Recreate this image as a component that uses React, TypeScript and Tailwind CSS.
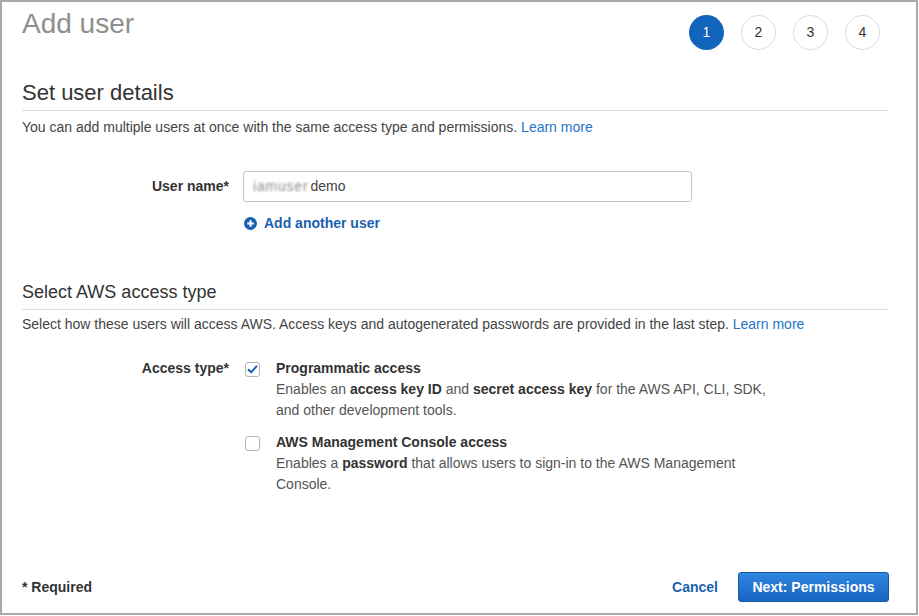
import React from "react";

const font = { fontFamily: '"Liberation Sans", Arial, sans-serif' };

function Step({ n, active }: { n: number; active?: boolean }) {
  return active ? (
    <div className="flex h-[35px] w-[35px] items-center justify-center rounded-full bg-[#1265bb] text-[14px] text-white">
      {n}
    </div>
  ) : (
    <div className="flex h-[35px] w-[35px] items-center justify-center rounded-full border border-[#dcdcdc] bg-white text-[14px] text-[#333]">
      {n}
    </div>
  );
}

function CheckBox({ checked, className }: { checked?: boolean; className?: string }) {
  return (
    <div
      className={
        "flex h-[15px] w-[15px] shrink-0 items-center justify-center rounded-[3px] border border-[#b4b4b4] bg-white " +
        (className ?? "")
      }
    >
      {checked && (
        <svg width="13" height="13" viewBox="0 0 13 13">
          <path d="M2.6 6.8 L5.2 9.3 L10.4 3.4" fill="none" stroke="#1560b8" strokeWidth="2" strokeLinecap="round" strokeLinejoin="round" />
        </svg>
      )}
    </div>
  );
}

export default function App() {
  return (
    <div style={font} className="flex h-[615px] w-[918px] flex-col border-2 border-[#a9a9a9] bg-white pl-5 pr-[27px] text-[#444]">
      {/* Header */}
      <div className="flex items-start justify-between">
        <h1 className="mt-[6px] text-[28px] leading-[32px] text-[#8f8f8f]">Add user</h1>
        <div className="mr-[9px] mt-[13px] flex gap-[17px]">
          <Step n={1} active />
          <Step n={2} />
          <Step n={3} />
          <Step n={4} />
        </div>
      </div>

      {/* Set user details */}
      <h2 className="mt-[29px] border-b border-[#dddddd] pb-[3px] text-[22px] leading-[28px] text-[#333]">Set user details</h2>
      <p className="mt-[6px] text-[14px] leading-[20px] text-[#444]">
        You can add multiple users at once with the same access type and permissions.{" "}
        <span className="text-[#2276cb]">Learn more</span>
      </p>

      <div className="mt-[34px] flex items-center">
        <div className="w-[207px] text-right text-[14px] font-bold text-[#333]">User name*</div>
        <div className="ml-[14px] flex h-[31px] w-[449px] items-center rounded-[3px] border border-[#c4c4c4] pl-[9px] text-[14px] text-[#444]">
          <span className="mr-[2px] whitespace-nowrap tracking-[0.8px] text-[#8a8a8a] blur-[1px]">iamuser</span>
          <span>demo</span>
        </div>
      </div>

      <div className="ml-[221px] mt-[11px] flex items-center text-[14px] font-bold leading-[20px] text-[#1a5fb0]">
        <svg width="13" height="13" viewBox="0 0 13 13" className="ml-[1px]">
          <circle cx="6.5" cy="6.5" r="6.5" fill="#1a5fb0" />
          <path d="M6.5 3.2 V9.8 M3.2 6.5 H9.8" stroke="white" strokeWidth="2" />
        </svg>
        <span className="ml-[7px]">Add another user</span>
      </div>

      {/* Select AWS access type */}
      <h2 className="mt-[47px] border-b border-[#dddddd] pb-[5px] text-[18px] leading-[24px] text-[#333]">Select AWS access type</h2>
      <p className="mt-[4px] text-[14px] leading-[20px] text-[#444]">
        Select how these users will access AWS. Access keys and autogenerated passwords are provided in the last step.{" "}
        <span className="text-[#2276cb]">Learn more</span>
      </p>

      <div className="mt-[24px] flex items-start">
        <div className="w-[207px] text-right text-[14px] font-bold leading-[21px] text-[#333]">Access type*</div>
        <div className="ml-[16px] flex flex-col">
          <div className="flex items-start">
            <CheckBox checked className="mt-[4px]" />
            <div className="ml-[16px] text-[14px] leading-[21px] text-[#555]">
              <div className="font-bold text-[#333]">Programmatic access</div>
              <div>
                Enables an <b className="text-[#333]">access key ID</b> and <b className="text-[#333]">secret access key</b> for the AWS API, CLI, SDK,
                <br />
                and other development tools.
              </div>
            </div>
          </div>
          <div className="mt-[11px] flex items-start">
            <CheckBox className="mt-[4px]" />
            <div className="ml-[16px] text-[14px] leading-[21px] text-[#555]">
              <div className="font-bold text-[#333]">AWS Management Console access</div>
              <div>
                Enables a <b className="text-[#333]">password</b> that allows users to sign-in to the AWS Management
                <br />
                Console.
              </div>
            </div>
          </div>
        </div>
      </div>

      {/* Footer */}
      <div className="mt-auto flex items-center justify-between pb-[11px]">
        <div className="text-[14px] font-bold text-[#333]">* Required</div>
        <div className="flex items-center">
          <span className="mr-[20px] text-[14px] font-bold text-[#1a5fb0]">Cancel</span>
          <button className="flex h-[30px] w-[151px] items-center justify-center rounded-[3px] border border-[#1857a3] bg-gradient-to-b from-[#2e86df] to-[#1a64c2] text-[14px] font-bold text-white">
            Next: Permissions
          </button>
        </div>
      </div>
    </div>
  );
}
